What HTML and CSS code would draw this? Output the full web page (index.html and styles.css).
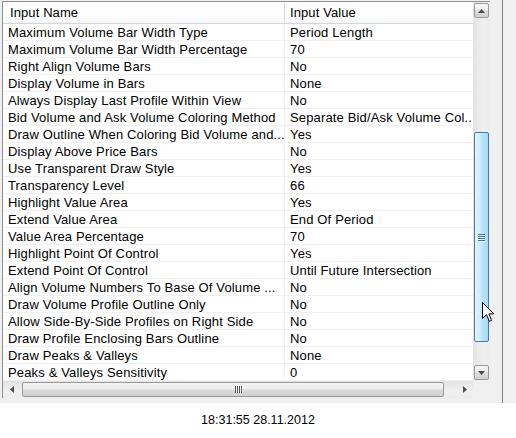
FILE: index.html
```html
<!DOCTYPE html>
<html>
<head>
<meta charset="utf-8">
<link rel="stylesheet" href="styles.css">
</head>
<body>
<div class="panel">
  <div class="grid">
    <div class="main">
      <div class="list">
        <div class="hdr"><div class="hname">Input Name</div><div class="hval">Input Value</div></div>
        <div class="row"><div class="name">Maximum Volume Bar Width Type</div><div class="val">Period Length</div></div>
        <div class="row"><div class="name">Maximum Volume Bar Width Percentage</div><div class="val">70</div></div>
        <div class="row"><div class="name">Right Align Volume Bars</div><div class="val">No</div></div>
        <div class="row"><div class="name">Display Volume in Bars</div><div class="val">None</div></div>
        <div class="row"><div class="name">Always Display Last Profile Within View</div><div class="val">No</div></div>
        <div class="row"><div class="name">Bid Volume and Ask Volume Coloring Method</div><div class="val">Separate Bid/Ask Volume Col...</div></div>
        <div class="row"><div class="name">Draw Outline When Coloring Bid Volume and...</div><div class="val">Yes</div></div>
        <div class="row"><div class="name">Display Above Price Bars</div><div class="val">No</div></div>
        <div class="row"><div class="name">Use Transparent Draw Style</div><div class="val">Yes</div></div>
        <div class="row"><div class="name">Transparency Level</div><div class="val">66</div></div>
        <div class="row"><div class="name">Highlight Value Area</div><div class="val">Yes</div></div>
        <div class="row"><div class="name">Extend Value Area</div><div class="val">End Of Period</div></div>
        <div class="row"><div class="name">Value Area Percentage</div><div class="val">70</div></div>
        <div class="row"><div class="name">Highlight Point Of Control</div><div class="val">Yes</div></div>
        <div class="row"><div class="name">Extend Point Of Control</div><div class="val">Until Future Intersection</div></div>
        <div class="row"><div class="name">Align Volume Numbers To Base Of Volume ...</div><div class="val">No</div></div>
        <div class="row"><div class="name">Draw Volume Profile Outline Only</div><div class="val">No</div></div>
        <div class="row"><div class="name">Allow Side-By-Side Profiles on Right Side</div><div class="val">No</div></div>
        <div class="row"><div class="name">Draw Profile Enclosing Bars Outline</div><div class="val">No</div></div>
        <div class="row"><div class="name">Draw Peaks &amp; Valleys</div><div class="val">None</div></div>
        <div class="row"><div class="name">Peaks &amp; Valleys Sensitivity</div><div class="val">0</div></div>
      </div>
      <div class="vscroll">
        <div class="vbtn"><svg width="7" height="4" viewBox="0 0 7 4"><path d="M3.5 0 L7 4 L0 4 Z" fill="#4a4a4a"/></svg></div>
        <div class="vthumb"><div class="vgrip"><i></i><i></i><i></i><i></i></div></div>
        <div class="vspace"></div>
        <div class="vbtn"><svg width="7" height="4" viewBox="0 0 7 4"><path d="M0 0 L7 0 L3.5 4 Z" fill="#4a4a4a"/></svg></div>
      </div>
    </div>
    <div class="hrow">
      <div class="hscroll">
        <div class="hbtn"><svg width="4" height="7" viewBox="0 0 4 7"><path d="M4 0 L4 7 L0 3.5 Z" fill="#4a4a4a"/></svg></div>
        <div class="hthumb"><div class="hgrip"><i></i><i></i><i></i><i></i></div></div>
        <div class="hspace"></div>
        <div class="hbtn"><svg width="4" height="7" viewBox="0 0 4 7"><path d="M0 0 L4 3.5 L0 7 Z" fill="#4a4a4a"/></svg></div>
      </div>
      <div class="corner"></div>
    </div>
  </div>
  <div class="gap"></div>
  <div class="divider"></div>
  <div class="rest"></div>
</div>
<div class="time">18:31:55 28.11.2012</div>
<svg class="cursor" width="13" height="21" viewBox="0 0 13 21"><path d="M0.5 0.5 V16.5 L4.5 12.7 L7.3 19.3 L9.6 18.3 L6.9 11.9 H11.8 Z" fill="#fff" stroke="#000" stroke-width="1" stroke-linejoin="miter"/></svg>
</body>
</html>
```

FILE: styles.css
```css
html, body {
  margin: 0;
  padding: 0;
  background: #ffffff;
}
body {
  width: 516px;
  height: 438px;
  position: relative;
  overflow: hidden;
  font-family: "Liberation Sans", Arial, sans-serif;
  font-size: 13px;
  color: #000;
}
.panel {
  display: flex;
  height: 403px;
  background: #f0f0f0;
}
.grid {
  margin: 1px 0 0 2px;
  width: 488px;
  height: 397px;
  border-top: 1px solid #8e8f8f;
  border-left: 1px solid #8e8f8f;
  box-sizing: border-box;
  display: flex;
  flex-direction: column;
  background: #fff;
}
.main {
  display: flex;
  height: 379px;
}
.list {
  width: 470px;
  overflow: hidden;
  background: #fff;
}
.hdr {
  display: flex;
  height: 21px;
  line-height: 21px;
  border-bottom: 1px solid #d5d5d5;
  background: linear-gradient(to bottom, #ffffff 0%, #ffffff 55%, #f6f7f9 100%);
  letter-spacing: 0.1px;
}
.hname {
  width: 282px;
  box-sizing: border-box;
  padding-left: 7px;
  border-right: 1px solid #dcdcdc;
  white-space: nowrap;
}
.hval {
  flex: 1;
  padding-left: 5px;
  white-space: nowrap;
}
.row {
  display: flex;
  height: 16px;
  line-height: 17px;
  border-bottom: 1px solid #f0f0f0;
  letter-spacing: 0.15px;
}
.name {
  width: 282px;
  box-sizing: border-box;
  padding-left: 5px;
  border-right: 1px solid #f0f0f0;
  white-space: nowrap;
  overflow: hidden;
}
.val {
  flex: 1;
  padding-left: 5px;
  white-space: nowrap;
  overflow: hidden;
}
.vscroll {
  width: 17px;
  display: flex;
  flex-direction: column;
  align-items: center;
  background: linear-gradient(to right, #e3e3e3, #f0f0f0 60%, #ececec);
}
.vbtn {
  width: 15px;
  height: 15px;
  margin: 1px 0;
  box-sizing: border-box;
  border: 1px solid #9a9a9a;
  border-radius: 2px;
  background: linear-gradient(to bottom, #f7f7f7 0%, #ececec 45%, #dcdcdc 55%, #d0d0d0 100%);
  display: flex;
  align-items: center;
  justify-content: center;
}
.vthumb {
  width: 15px;
  height: 210px;
  margin-top: 113px;
  box-sizing: border-box;
  border: 1px solid #3c7fb1;
  border-radius: 2px;
  background: linear-gradient(to right, #e5f4fc 0%, #d4edfb 35%, #bee6fd 50%, #a7d9f5 100%);
  display: flex;
  align-items: center;
  justify-content: center;
}
.vgrip {
  display: flex;
  flex-direction: column;
  gap: 1px;
}
.vgrip i {
  display: block;
  width: 7px;
  height: 1px;
  background: #3e6f94;
  box-shadow: 0 1px 0 #e9f6fd;
}
.vspace {
  flex: 1;
}
.hrow {
  display: flex;
  height: 17px;
}
.hscroll {
  width: 470px;
  display: flex;
  align-items: center;
  background: linear-gradient(to bottom, #e3e3e3, #f0f0f0 60%, #ececec);
}
.hbtn {
  width: 17px;
  height: 17px;
  display: flex;
  align-items: center;
  justify-content: center;
}
.hthumb {
  width: 422px;
  height: 15px;
  margin-left: 2px;
  box-sizing: border-box;
  border: 1px solid #9a9a9a;
  border-radius: 2px;
  background: linear-gradient(to bottom, #f4f4f4 0%, #ececec 45%, #dbdbdb 55%, #cfcfcf 100%);
  display: flex;
  align-items: center;
  justify-content: center;
}
.hgrip {
  display: flex;
  gap: 1px;
  margin-left: 10px;
}
.hgrip i {
  display: block;
  width: 1px;
  height: 7px;
  background: #555;
  box-shadow: 1px 0 0 #f8f8f8;
}
.hspace {
  flex: 1;
}
.corner {
  width: 17px;
  background: #f0f0f0;
}
.gap {
  width: 12px;
}
.divider {
  width: 1px;
  background: #7f7f7f;
}
.rest {
  flex: 1;
  background: #f0f0f0;
}
.time {
  height: 35px;
  line-height: 35px;
  text-align: center;
  font-size: 12.5px;
}
.cursor {
  position: absolute;
  left: 482px;
  top: 302px;
}
```
